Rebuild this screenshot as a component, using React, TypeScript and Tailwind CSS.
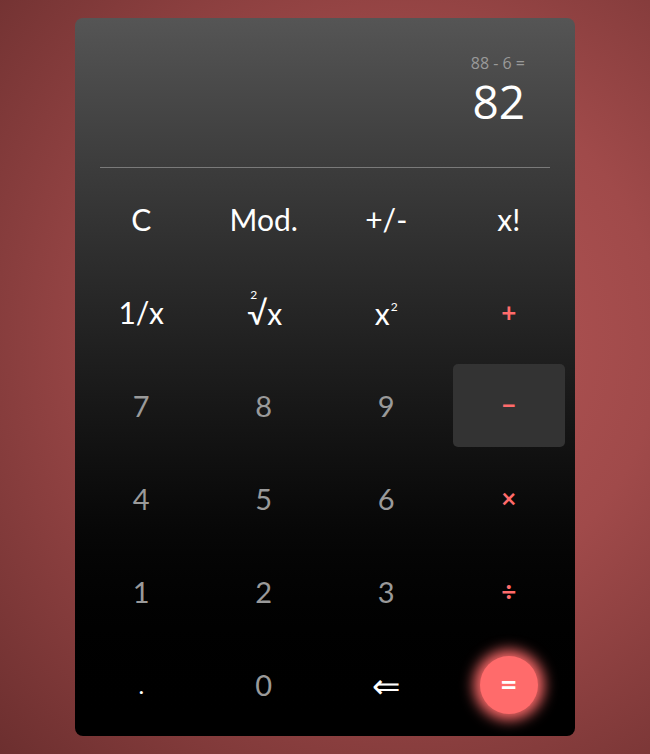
import React from "react";

type Btn = { label: React.ReactNode; kind: "fn" | "num" | "op" | "eq" | "dot" | "arrow"; active?: boolean };

const rows: Btn[][] = [
  [
    { label: "C", kind: "fn" },
    { label: "Mod.", kind: "fn" },
    { label: "+/-", kind: "fn" },
    { label: "x!", kind: "fn" },
  ],
  [
    { label: "1/x", kind: "fn" },
    {
      label: (
        <span className="relative inline-block pl-[2px] leading-none">
          <span className="absolute left-[5px] top-[-8px] text-[12px] leading-none">2</span>
          <span className="text-[32px]">√</span>x
        </span>
      ),
      kind: "fn",
    },
    {
      label: (
        <span className="leading-none">
          x<span className="relative top-[-14px] ml-[1px] text-[12px] leading-none">2</span>
        </span>
      ),
      kind: "fn",
    },
    { label: "+", kind: "op" },
  ],
  [
    { label: "7", kind: "num" },
    { label: "8", kind: "num" },
    { label: "9", kind: "num" },
    { label: "−", kind: "op", active: true },
  ],
  [
    { label: "4", kind: "num" },
    { label: "5", kind: "num" },
    { label: "6", kind: "num" },
    { label: "×", kind: "op" },
  ],
  [
    { label: "1", kind: "num" },
    { label: "2", kind: "num" },
    { label: "3", kind: "num" },
    { label: "÷", kind: "op" },
  ],
  [
    { label: ".", kind: "dot" },
    { label: "0", kind: "num" },
    { label: "⇐", kind: "arrow" },
    { label: "=", kind: "eq" },
  ],
];

function Key({ b }: { b: Btn }) {
  if (b.kind === "eq") {
    return (
      <div className="m-[5px] flex h-[83px] items-center justify-center">
        <div className="flex h-[58px] w-[58px] items-center justify-center rounded-full bg-[#ff6b6b] pb-[2px] text-[30px] font-bold text-white shadow-[0_0_14px_6px_#ff6b6b]">
          =
        </div>
      </div>
    );
  }
  const cls =
    b.kind === "fn"
      ? "text-[30px] text-white"
      : b.kind === "num"
      ? "text-[29px] text-[#9a9a9a]"
      : b.kind === "dot"
      ? "text-[24px] text-white"
      : b.kind === "arrow"
      ? "text-[34px] text-white"
      : "text-[26px] font-bold text-[#ff6b6b]";
  return (
    <div
      className={
        "m-[5px] flex h-[83px] items-center justify-center rounded-[5px] " +
        (b.active ? "bg-[#333333] " : "") +
        cls
      }
    >
      {b.label}
    </div>
  );
}

export default function App() {
  return (
    <div
      className="flex h-[754px] w-[650px] justify-center pt-[18px]"
      style={{
        background:
          "radial-gradient(ellipse at 62% 45%, #b65656 0%, #a04a4a 45%, #6c2f2f 100%)",
        fontFamily: "Lato, 'Open Sans', sans-serif",
      }}
    >
      <div className="flex h-[718px] w-[500px] flex-col rounded-[8px] bg-gradient-to-b from-[#555555] to-[#000000]">
        <div className="flex h-[149px] flex-col items-end px-[50px] pt-[36px]" style={{ fontFamily: "'Open Sans', sans-serif" }}>
          <div className="text-[16px] leading-[18px] text-[#9a9a9a]">88 - 6 =</div>
          <div className="mt-[6px] text-[46px] leading-[46px] text-white">82</div>
        </div>
        <div className="mx-[25px] h-px bg-[#7a7a7a]" />
        <div className="grid grid-cols-4 px-[5px] pt-[5px]">
          {rows.flat().map((b, i) => (
            <Key key={i} b={b} />
          ))}
        </div>
      </div>
    </div>
  );
}
